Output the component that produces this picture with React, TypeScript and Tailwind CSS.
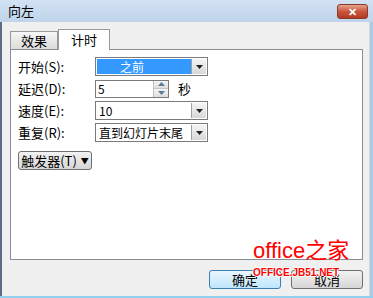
import React from "react";

const font = { fontFamily: '"SimSun", "Noto Sans CJK SC", sans-serif' };

const Arrow = () => (
  <div className="flex h-full w-[15px] items-center justify-center border-l border-[#a0a0a0] bg-gradient-to-b from-[#f4f4f4] to-[#d8d8d8]">
    <svg width="7" height="4" viewBox="0 0 7 4">
      <path d="M0 0h7L3.5 4z" fill="#222" />
    </svg>
  </div>
);

const Select = ({ value, selected }: { value: string; selected?: boolean }) => (
  <div className="flex h-[19px] w-[113px] items-stretch border border-[#7a7a7a] bg-white p-px">
    <div
      className={
        selected
          ? "flex flex-1 items-center justify-center bg-[#3399ff] pr-6 text-[12px] leading-none text-white"
          : "flex flex-1 items-center whitespace-nowrap pl-0.5 text-[12px] leading-none text-black"
      }
    >
      {value}
    </div>
    <Arrow />
  </div>
);

const Row = ({ label, children }: { label: string; children: React.ReactNode }) => (
  <div className="flex h-[19px] items-center">
    <span className="w-[77px]">{label}</span>
    {children}
  </div>
);

export default function App() {
  return (
    <div className="relative h-[298px] w-[373px] overflow-hidden bg-[#f0f0f0] text-[13px] text-black" style={font}>
      <div className="flex h-[22px] items-center justify-between bg-gradient-to-b from-[#d3e2f3] to-[#bfd4eb] pl-2 pr-[5px]">
        <span className="text-[13px] text-black">向左</span>
        <div className="flex h-[15px] w-[31px] items-center justify-center rounded-[3px] border border-[#8a3a2a] bg-gradient-to-b from-[#e8a08a] via-[#c8563d] to-[#b33a22] text-[11px] font-bold leading-none text-white">
          ✕
        </div>
      </div>
      <div className="flex h-[276px]">
        <div className="w-[2px] bg-[#5a6e86]" />
        <div className="flex-1 bg-[#f0f0f0] pt-[7px]">
          <div className="ml-[8px] flex items-end">
            <div className="flex h-[18px] w-[48px] items-center justify-center border border-b-0 border-[#999] bg-gradient-to-b from-[#f6f6f6] to-[#dcdcdc]">
              效果
            </div>
            <div className="z-10 -mb-px flex h-[21px] w-[52px] items-center justify-center border border-b-0 border-[#999] bg-white">
              计时
            </div>
          </div>
          <div className="ml-[8px] mr-[6px] flex h-[211px] flex-col gap-[3px] border border-[#898c95] bg-white pl-[7px] pt-[7px]">
            <Row label="开始(S):">
              <Select value="之前" selected />
            </Row>
            <Row label="延迟(D):">
              <div className="flex h-[18px] w-[74px] items-stretch border border-[#7a7a7a] bg-white">
                <div className="flex flex-1 items-center pl-0.5 text-[12px] leading-none">5</div>
                <div className="flex w-[15px] flex-col border-l border-[#c0c0c0]">
                  <div className="flex flex-1 items-center justify-center bg-gradient-to-b from-[#f4f4f4] to-[#dedede]">
                    <svg width="7" height="4" viewBox="0 0 7 4"><path d="M0 4h7L3.5 0z" fill="#5a7aa0" /></svg>
                  </div>
                  <div className="flex flex-1 items-center justify-center border-t border-[#c8c8c8] bg-gradient-to-b from-[#f4f4f4] to-[#dedede]">
                    <svg width="7" height="4" viewBox="0 0 7 4"><path d="M0 0h7L3.5 4z" fill="#5a7aa0" /></svg>
                  </div>
                </div>
              </div>
              <span className="ml-[9px]">秒</span>
            </Row>
            <Row label="速度(E):">
              <Select value="10" />
            </Row>
            <Row label="重复(R):">
              <Select value="直到幻灯片末尾" />
            </Row>
            <div className="mt-[6px] flex h-[19px] w-[74px] items-center justify-center gap-1 rounded-[3px] border border-[#707070] bg-gradient-to-b from-[#f2f2f2] to-[#d6d6d6]">
              <span>触发器(T)</span>
              <span className="text-[8px]">▼</span>
            </div>
          </div>
          <div className="mr-[6px] mt-[10px] flex justify-end gap-[10px]">
            <div className="flex h-[19px] w-[72px] items-center justify-center rounded-[3px] border border-[#3c7fb1] bg-gradient-to-b from-[#eaf6fd] to-[#bee6fd]">
              确定
            </div>
            <div className="flex h-[19px] w-[72px] items-center justify-center rounded-[3px] border border-[#707070] bg-gradient-to-b from-[#f2f2f2] to-[#d6d6d6]">
              取消
            </div>
          </div>
        </div>
        <div className="w-[4px] border-l border-[#d8d8d8] bg-[#a8cbe8]" />
      </div>
      <div className="absolute left-[253px] top-[240px] text-[22px] leading-none text-[#ff0000]" style={{ fontFamily: '"Liberation Sans", "Noto Sans CJK SC", sans-serif' }}>
        office之家
      </div>
      <div
        className="absolute left-[253px] top-[268px] text-[10px] font-bold leading-none text-[#ff0000]"
        style={{ fontFamily: '"Liberation Sans", sans-serif', textShadow: "1px 0 #fff,-1px 0 #fff,0 1px #fff,0 -1px #fff" }}
      >
        OFFICE.JB51.NET
      </div>
      <div className="absolute bottom-0 left-0 h-[2px] w-full bg-[#8fd0ee]" />
    </div>
  );
}
